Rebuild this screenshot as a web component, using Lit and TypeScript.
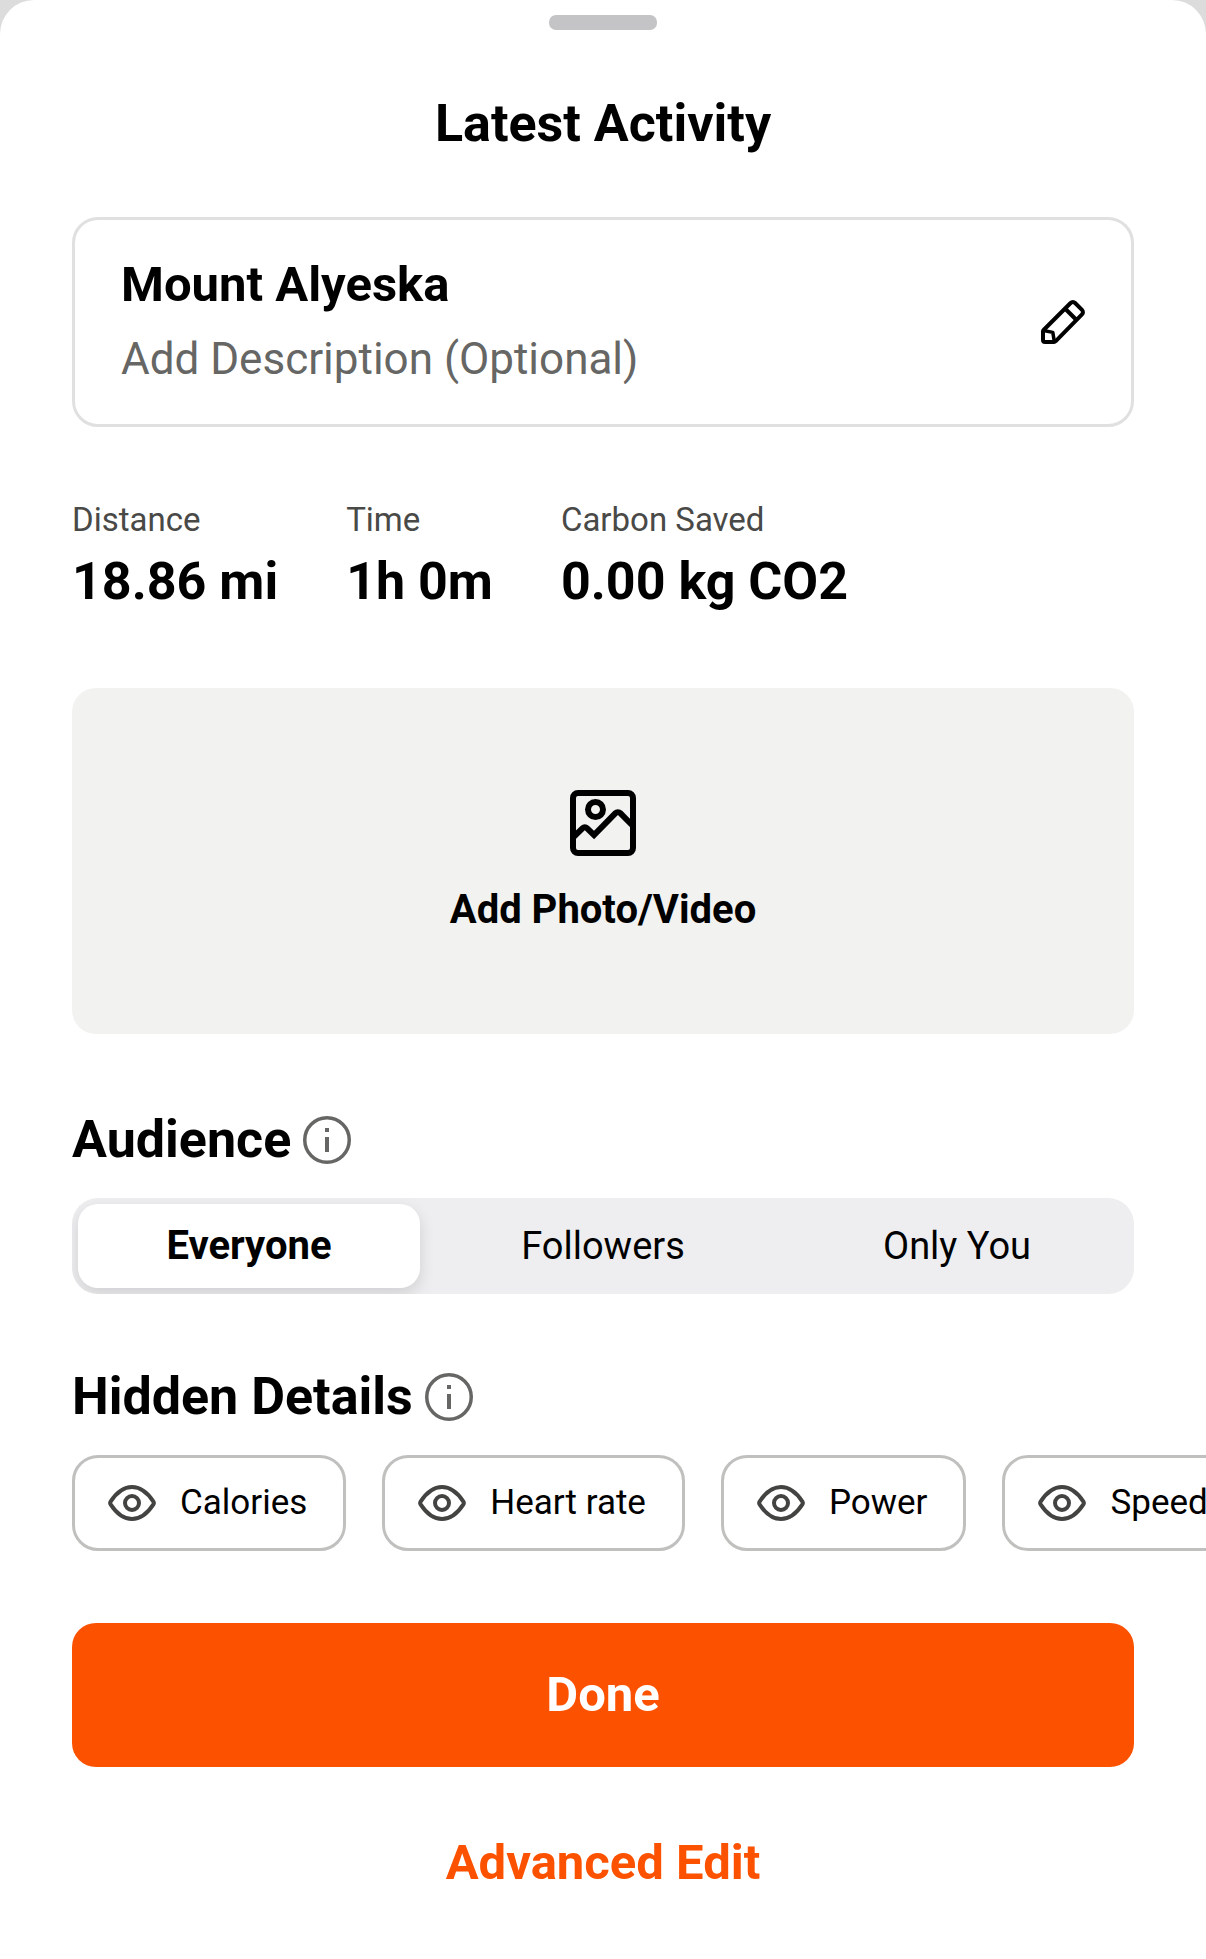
import { LitElement, html, css } from "lit";
import { customElement, state } from "lit/decorators.js";

interface Stat {
  label: string;
  value: string;
}

const STATS: Stat[] = [
  { label: "Distance", value: "18.86 mi" },
  { label: "Time", value: "1h 0m" },
  { label: "Carbon Saved", value: "0.00 kg CO2" },
];

const AUDIENCES = ["Everyone", "Followers", "Only You"];
const DETAILS = ["Calories", "Heart rate", "Power", "Speed"];

const pencilIcon = html`
  <svg class="icon" width="44" height="44" viewBox="0 0 44 44" fill="none" stroke="#000" stroke-width="4" stroke-linejoin="round" aria-hidden="true">
    <path d="M2.600 30 29.600 3a3.200 3.200 0 0 1 4.500 0l6.900 6.900a3.200 3.200 0 0 1 0 4.500L14.500 41.300a2 2 0 0 1-1.500.7H4a2 2 0 0 1-2-2v-8.600a2 2 0 0 1 .600-1.400z" />
    <path d="M24 8.500 35.500 20" />
    <path d="M2.500 30.500 11.800 32.400 13.300 41.500" stroke-width="3.500" />
  </svg>
`;

const photoIcon = html`
  <svg class="icon" width="66" height="66" viewBox="0 0 66 66" fill="none" stroke="#000" stroke-width="6" aria-hidden="true">
    <rect x="3" y="3" width="60" height="60" rx="5" />
    <circle cx="25.5" cy="19.5" r="7.500" />
    <path d="M4 46.500 12.700 38.200a3 3 0 0 1 4.200 0L24 45 45.500 23.200a3.400 3.400 0 0 1 4.800 0L62 35" />
  </svg>
`;

const infoIcon = html`
  <svg class="icon" width="48" height="48" viewBox="0 0 48 48" aria-hidden="true">
    <circle cx="24" cy="24" r="22.250" fill="none" stroke="#666664" stroke-width="3.500" />
    <path d="M22 12h4v4h-4zM22 21h4v15h-4z" fill="#666664" />
  </svg>
`;

const eyeIcon = html`
  <svg class="icon" width="48" height="36" viewBox="0 0 48 36" fill="none" stroke="#434341" stroke-width="4" stroke-linejoin="round" aria-hidden="true">
    <path d="M2.600 16.600C8.200 8 15.400 2 24 2s15.800 6 21.400 14.600a2.600 2.600 0 0 1 0 2.800C39.800 28 32.600 34 24 34S8.200 28 2.600 19.400a2.600 2.600 0 0 1 0-2.800z" />
    <circle cx="24" cy="18" r="7" />
  </svg>
`;

@customElement("app-root")
export class AppRoot extends LitElement {
  @state() private audience = AUDIENCES[0];
  @state() private concealed: string[] = [];

  static styles = css`
    :host {
      display: block;
      min-height: 100vh;
      background: #dcdcdc;
      color: #000;
      font-family: Roboto, "Liberation Sans", sans-serif;
    }
    * {
      box-sizing: border-box;
    }
    h1, h2, dl, dt, dd {
      margin: 0;
    }
    button {
      margin: 0;
      padding: 0;
      border: 0;
      background: none;
      color: inherit;
      font: inherit;
      cursor: pointer;
    }
    .icon {
      display: block;
      flex: none;
    }
    .sheet {
      display: flex;
      flex-direction: column;
      min-height: 100vh;
      padding: 15px 72px 64px;
      border-radius: 34px 34px 0 0;
      background: #fff;
    }
    .handle {
      align-self: center;
      width: 108px;
      height: 15px;
      border-radius: 7px;
      background: #c4c4c7;
    }
    .heading {
      font-size: 52px;
      line-height: 60px;
      font-weight: 700;
    }
    .title {
      margin-top: 64px;
      text-align: center;
    }
    .card {
      display: flex;
      align-items: center;
      justify-content: space-between;
      gap: 24px;
      margin-top: 63px;
      padding: 35px 46px;
      border: 3px solid #e0e0e0;
      border-radius: 26px;
      text-align: left;
    }
    .card-text {
      display: flex;
      flex-direction: column;
      gap: 14px;
      line-height: 60px;
    }
    .name {
      font-size: 49px;
      font-weight: 700;
    }
    .description {
      color: #666664;
      font-size: 44px;
    }
    .stats {
      display: flex;
      flex-wrap: wrap;
      gap: 24px 68px;
      margin-top: 73px;
    }
    .stat {
      display: flex;
      flex-direction: column;
      gap: 12px;
    }
    .stat-label {
      color: #494947;
      font-size: 33px;
      line-height: 40px;
    }
    .photo {
      display: flex;
      flex-direction: column;
      align-items: center;
      gap: 30px;
      margin-top: 76px;
      padding: 102px 24px 100px;
      border-radius: 24px;
      background: #f2f2f0;
      font-size: 40px;
      line-height: 48px;
      font-weight: 700;
    }
    .section-head {
      display: flex;
      align-items: center;
      gap: 12px;
      margin-top: 76px;
    }
    .segments {
      display: grid;
      grid-template-columns: repeat(3, 1fr);
      gap: 12px;
      margin-top: 28px;
      padding: 6px;
      border-radius: 26px;
      background: #eeeef0;
      overflow: hidden;
    }
    .segment {
      display: block;
      border-radius: 20px;
      font-size: 38px;
      line-height: 84px;
      text-align: center;
      cursor: pointer;
    }
    .segment:has(.radio:checked) {
      background: #fff;
      box-shadow: 0 6px 16px rgba(0, 0, 0, 0.13);
      font-size: 40px;
      font-weight: 700;
    }
    .segment:has(.radio:focus-visible) {
      outline: 3px solid #fc5200;
    }
    .segments + .section-head {
      margin-top: 73px;
    }
    .radio {
      position: absolute;
      opacity: 0;
      pointer-events: none;
    }
    .chips {
      display: flex;
      gap: 36px;
      margin: 28px -72px 0 0;
      overflow-x: auto;
      scrollbar-width: none;
    }
    .chip {
      display: flex;
      flex: none;
      align-items: center;
      gap: 24px;
      padding: 21px 36px 21px 33px;
      border: 3px solid #c0c0be;
      border-radius: 26px;
      font-size: 35px;
      line-height: 48px;
    }
    .chip[aria-pressed="true"] {
      color: #9a9a98;
    }
    .action {
      font-size: 49px;
      line-height: 60px;
      font-weight: 700;
    }
    .done {
      margin-top: 72px;
      padding: 42px 24px;
      border-radius: 24px;
      background: #fc5200;
      color: #fff;
    }
    .advanced {
      align-self: center;
      margin-top: 66px;
      color: #fc5200;
      text-decoration: none;
    }
  `;

  private toggle(name: string) {
    this.concealed = this.concealed.includes(name)
      ? this.concealed.filter((n) => n !== name)
      : [...this.concealed, name];
  }

  render() {
    return html`
      <main class="sheet">
        <div class="handle"></div>
        <h1 class="heading title">Latest Activity</h1>

        <button class="card" type="button">
          <span class="card-text">
            <span class="name">Mount Alyeska</span>
            <span class="description">Add Description (Optional)</span>
          </span>
          ${pencilIcon}
        </button>

        <dl class="stats">
          ${STATS.map(
            (s) => html`
              <div class="stat">
                <dt class="stat-label">${s.label}</dt>
                <dd class="heading">${s.value}</dd>
              </div>
            `
          )}
        </dl>

        <button class="photo" type="button">
          ${photoIcon}
          <span>Add Photo/Video</span>
        </button>

        <div class="section-head">
          <h2 class="heading" id="audience">Audience</h2>
          <button type="button" aria-label="About audience">${infoIcon}</button>
        </div>
        <div class="segments" role="radiogroup" aria-labelledby="audience">
          ${AUDIENCES.map(
            (name) => html`
              <label class="segment">
                <input
                  class="radio"
                  type="radio"
                  name="audience"
                  .value=${name}
                  .checked=${name === this.audience}
                  @change=${() => (this.audience = name)}
                />${name}
              </label>
            `
          )}
        </div>

        <div class="section-head">
          <h2 class="heading" id="details">Hidden Details</h2>
          <button type="button" aria-label="About hidden details">${infoIcon}</button>
        </div>
        <div class="chips" role="group" aria-labelledby="details">
          ${DETAILS.map(
            (name) => html`
              <button
                class="chip"
                type="button"
                aria-pressed=${this.concealed.includes(name) ? "true" : "false"}
                @click=${() => this.toggle(name)}
              >
                ${eyeIcon}<span>${name}</span>
              </button>
            `
          )}
        </div>

        <button class="action done" type="button">Done</button>
        <a class="action advanced" href="#advanced">Advanced Edit</a>
      </main>
    `;
  }
}
